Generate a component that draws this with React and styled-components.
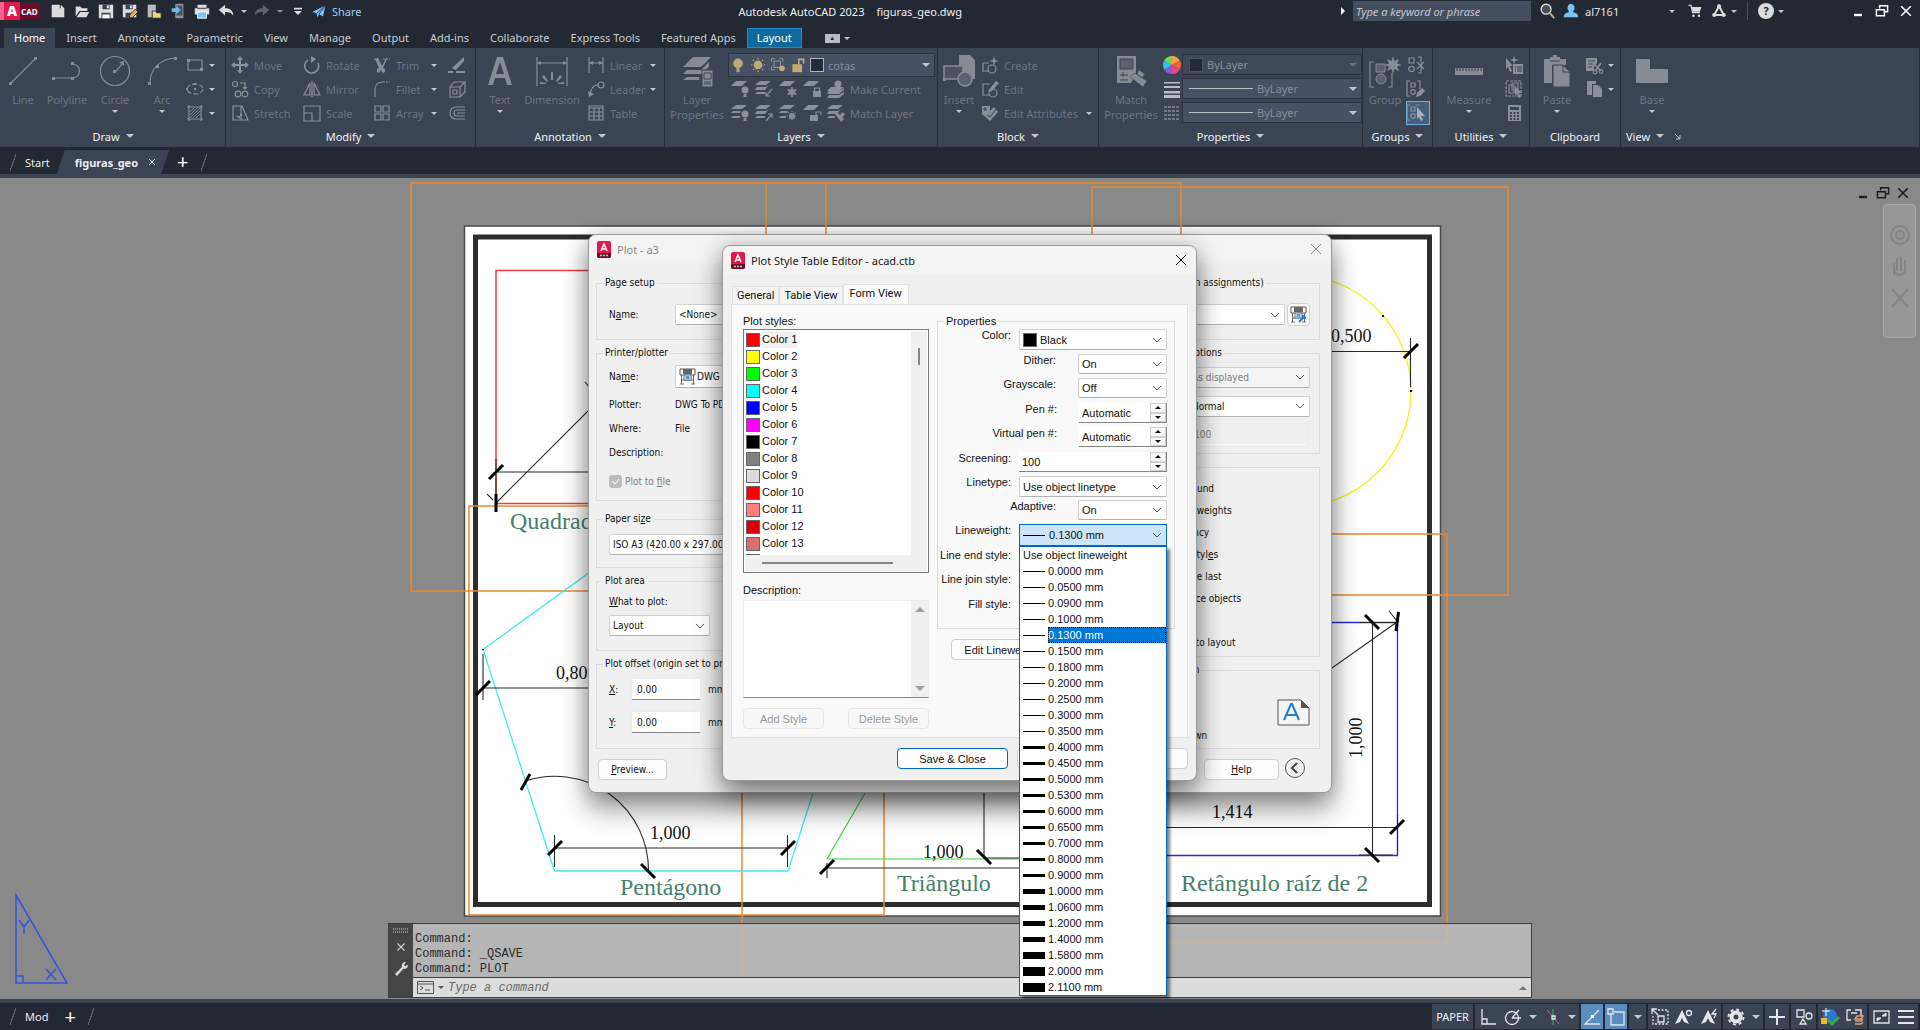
import styled, { createGlobalStyle, css } from "styled-components";

const GlobalStyle = createGlobalStyle`
  * {
    box-sizing: border-box;
  }
  body {
    margin: 0;
    background: #222933;
    font-family: "Noto Sans", "Open Sans", sans-serif;
    font-size: 11px;
  }
  button, input, select, textarea {
    font: inherit;
    color: inherit;
    margin: 0;
  }
  button {
    border: 0;
    padding: 0;
    background: none;
  }
`;

/* ---------- icons ---------- */

const line = { fill: "none", stroke: "currentColor", strokeWidth: 1.2 };
const solid = { fill: "currentColor" };

const icons = {
  newFile: <path d="M3 3h9v4h5v10H3z M13 3l4 4h-4z" fill="#dcdcdc" />,
  open: (
    <>
      <path d="M3 16V5h5l2 2h6v3H7z" fill="#dcdcdc" />
      <path d="M8 11h10l-3 6H4z" fill="#dcdcdc" />
    </>
  ),
  save: (
    <>
      <path d="M2 3h16v15H2z" fill="#dcdcdc" />
      <path d="M6 3h8v5H6z M5 12h10v6H5z" fill="#3b4453" />
      <path d="M11 4h2v3h-2z M6 14h8v4H6z" fill="#fff" />
    </>
  ),
  saveAs: (
    <>
      <path d="M2 3h15v14H2z" fill="#dcdcdc" />
      <path d="M5 3h8v5H5z M5 12h8v5H5z" fill="#3b4453" />
      <path d="M10 4h2v3h-2z" fill="#fff" />
      <path d="M9 18l1-4 6-6 3 3-6 6z" fill="#f0b050" stroke="#222933" />
    </>
  ),
  openMobile: (
    <>
      <path d="M3 3h9v14H3z" fill="#b9bdc4" />
      <path d="M8 10h4l1 2h5v6H8z" fill="#f5d080" stroke="#222933" />
    </>
  ),
  saveMobile: (
    <>
      <path d="M7 2h9v16H7z" fill="#8f959e" />
      <path d="M8 4h7v11H8z" fill="#4b5361" />
      <path d="M3 7h5V4l5 5-5 5v-3H3z" fill="#6ab8f0" />
    </>
  ),
  print: (
    <>
      <path d="M5 3h10v4H5z M2 7h16v7H2z" fill="#dcdcdc" />
      <path d="M5 11h10v7H5z" fill="#7cc4f8" stroke="#fff" />
      <path d="M5 7h10" stroke="#222933" />
    </>
  ),
  undo: <path d="M2 9l7-6v4c6 0 9 3 9 8-2-3-4-4-9-4v4z" fill="#dcdcdc" />,
  redo: <path d="M18 9l-7-6v4c-6 0-9 3-9 8 2-3 4-4 9-4v4z" fill="#5c6470" />,
  plane: (
    <>
      <path d="M2 11L18 3l-3 14-5-3-2 4-1-5z" fill="#7cc4f8" />
      <path d="M7 13l11-10-8 11" stroke="#222933" fill="none" />
    </>
  ),
  customize: <path d="M5 6h10v2H5z M5 10h10l-5 5z" fill="#dcdcdc" />,
  search: (
    <>
      <circle cx="9" cy="8" r="5.5" fill="#454e5c" stroke="#dcdcdc" strokeWidth="1.5" />
      <path d="M13 12l5 6" stroke="#c8ae8a" strokeWidth="2" />
    </>
  ),
  user: (
    <path d="M10 2a4 4.500 0 0 1 2.500 8v1.500c3 .5 5.500 2 5.500 5.500H2c0-3.500 2.500-5 5.500-5.500V10A4 4.500 0 0 1 10 2z" fill="#7cc4f8" />
  ),
  cart: (
    <>
      <path d="M2 3h3l2 9h9" fill="none" stroke="#dcdcdc" strokeWidth="1.500" />
      <path d="M6 5h12l-2 6H7z" fill="#dcdcdc" />
      <circle cx="8" cy="16" r="1.500" fill="#dcdcdc" />
      <circle cx="15" cy="16" r="1.500" fill="#dcdcdc" />
    </>
  ),
  apps: (
    <>
      <path d="M10 4L4 15h12z" fill="none" stroke="#dcdcdc" strokeWidth="2.500" />
      <circle cx="10" cy="4" r="2.500" fill="#dcdcdc" />
      <circle cx="4" cy="15" r="2.500" fill="#dcdcdc" />
      <circle cx="16" cy="15" r="2.500" fill="#dcdcdc" />
    </>
  ),
  minimize: <path d="M5 15h10" stroke="currentColor" strokeWidth="3" />,
  restore: (
    <path d="M7 7V3.500h10V11h-4M3 8.500h10V16H3z" fill="none" stroke="currentColor" strokeWidth="1.800" />
  ),
  close: <path d="M4 4l12 12M16 4L4 16" stroke="currentColor" strokeWidth="2" />,

  rect: (
    <>
      <path d="M3 5h14v10H3z" {...line} />
      <path d="M2 4h3v3H2z M15 13h3v3h-3z" {...solid} />
    </>
  ),
  ellipse: (
    <>
      <ellipse cx="10" cy="10" rx="8" ry="5" {...line} strokeDasharray="5 2" />
      <path d="M9 9h2v2H9z M1 9h2v2H1z M9 4h2v2H9z" {...solid} />
    </>
  ),
  hatch: (
    <>
      <path d="M2 4h16M2 16h16M4 2v16M16 2v16" {...line} />
      <path d="M5 9l4-4M5 12l7-7M5 15l10-10M8 15l7-7M11 15l4-4" {...line} strokeWidth=".8" />
    </>
  ),
  move: (
    <path d="M10 1l3 4h-2v4h4V7l4 3-4 3v-2h-4v4h2l-3 4-3-4h2v-4H5v2l-4-3 4-3v2h4V5H7z" {...solid} />
  ),
  copy: (
    <>
      <circle cx="5" cy="5" r="2.500" {...line} />
      <circle cx="8" cy="15" r="2.800" {...line} />
      <circle cx="15" cy="15" r="2.800" {...line} />
      <path d="M10 4h5v5" {...line} />
      <path d="M12.500 8h5L15 11z" {...solid} />
    </>
  ),
  stretch: (
    <>
      <path d="M3 3h8v14H3z M12 3l6 14h-7" {...line} />
      <path d="M6 13h7l-3-3v6z" {...solid} />
    </>
  ),
  rotate: (
    <>
      <path d="M6 5a7 7 0 1 0 10 3" {...line} strokeWidth="1.600" />
      <path d="M9 1v7l5-4z" {...solid} />
    </>
  ),
  mirror: <path d="M8 4v12H2z M12 4v12h6z M10 2v16" {...line} />,
  scale: <path d="M2 3h16v15H2z M2 10h8v8H2z" {...line} />,
  trim: (
    <>
      <path d="M2 4h6M11 4h7" {...line} strokeDasharray="2 1" />
      <path d="M6 3l4 8 4-8 1 1-4 9 2 1v3l-2 1-2-3-2 3-2-1v-3l2-1-4-9z" {...solid} />
    </>
  ),
  fillet: (
    <>
      <path d="M3 18v-7c0-5 3-8 8-8" {...line} />
      <path d="M11 3h7" {...line} strokeDasharray="2 1" />
    </>
  ),
  array: <path d="M3 3h6v6H3z M11 3h6v6h-6z M3 11h6v6H3z M11 11h6v6h-6z" {...line} />,
  erase: (
    <>
      <path d="M17 2v4l-8 9-4-2z" {...solid} />
      <path d="M1 17h5M9 17h9" stroke="currentColor" strokeWidth="2" />
    </>
  ),
  explode: (
    <path d="M3 8h10v10H3z M3 8l4-5h11l-5 5M18 3v10l-5 5M6 11h4v4H6z" {...line} />
  ),
  offset: (
    <path d="M18 4H9a6 6 0 0 0 0 12h9M18 7h-8a3 3 0 0 0 0 6h8M18 10h-8" {...line} />
  ),
  linear: (
    <>
      <path d="M3 2v16M17 2v16M4 8h12" {...line} />
      <path d="M3 8l4-2v4z M17 8l-4-2v4z" {...solid} />
    </>
  ),
  leader: (
    <>
      <circle cx="15" cy="6" r="3" {...line} />
      <path d="M12 6C7 6 5 9 4 15" {...line} />
      <path d="M2 12l1 6 5-3z" {...solid} />
    </>
  ),
  table: <path d="M3 3h14v14H3z M3 5h14M3 9h14M3 13h14M8 5v12M13 5v12" {...line} />,
  layerBulb: (
    <>
      <path d="M6 2h11l-5 5H1z" {...solid} />
      <circle cx="15" cy="11" r="3.500" {...solid} />
      <path d="M13.500 15h3v3h-3z" {...solid} />
    </>
  ),
  layerBulbAll: (
    <>
      <path d="M6 2h11l-5 4H1z M3 8h8l-1 2H1z M3 13h7v2H1z" {...solid} />
      <circle cx="15" cy="11" r="3.500" {...solid} />
      <path d="M13.500 15h3v3h-3z" {...solid} />
    </>
  ),
  layerArrow: (
    <>
      <path d="M6 2h11l-5 4H1z M3 8h9l3-2-4 5H1z M3 13h8v2H1z" {...solid} />
      <path d="M18 10l-6 7M12 13v4h4" {...line} />
    </>
  ),
  layerArrowUp: (
    <>
      <path d="M6 2h11l-5 4H1z M3 8h9l3-2-4 5H1z M3 13h8v2H1z" {...solid} />
      <path d="M12 18l6-7M14 11h4v4" {...line} />
    </>
  ),
  layerFreeze: (
    <>
      <path d="M6 2h11l-5 5H1z" {...solid} />
      <path d="M14 8v10M9.500 10.500l9 5M18.500 10.500l-9 5" {...line} strokeWidth="1.600" />
      <circle cx="14" cy="13" r="2.500" {...line} />
    </>
  ),
  layerLock: (
    <>
      <path d="M6 2h11l-5 5H1z" {...solid} />
      <path d="M11 12h8v6h-8z" {...solid} />
      <path d="M12.500 12V9h5v3" {...line} />
    </>
  ),
  layerUnlock: (
    <>
      <path d="M6 2h11l-5 5H1z" {...solid} />
      <path d="M8 12h8v6H8z" {...solid} />
      <path d="M14 12V9h5v3" {...line} />
    </>
  ),
  layerStack: (
    <>
      <circle cx="12" cy="5" r="3.500" {...solid} />
      <path d="M5 8h13l-5 4H1z M3 12h10l5-3v2l-5 4H1z M3 16h10l5-3v2l-5 4H1z" {...solid} />
    </>
  ),
  layerMatch: (
    <>
      <path d="M6 2h11l-5 4H1z M3 8h9l3-2-4 5H1z M3 13h6v2H1z" {...solid} />
      <path d="M9 11l3-1 6 6-3 3z M16 9l3 2-3 4-2-2z" {...solid} />
    </>
  ),
  layerSun: (
    <>
      <path d="M6 2h11l-5 4H1z M3 8h7l-1 2H1z M3 13h5v2H1z" {...solid} />
      <circle cx="14" cy="13" r="3" {...solid} />
      <path d="M14 8v10M9 13h10M10.500 9.500l7 7M17.500 9.500l-7 7" {...line} strokeDasharray="1 1" />
    </>
  ),
  create: (
    <>
      <path d="M3 8h6M3 8v8M2 16h7" {...line} />
      <circle cx="12" cy="14" r="4" {...line} />
      <path d="M14 1l1 4 4 1-4 1-1 4-1-4-4-1 4-1z" {...solid} />
    </>
  ),
  edit: (
    <>
      <path d="M10 5H3v11h7" {...line} />
      <circle cx="13" cy="14" r="4" {...line} />
      <path d="M8 12l8-10 3 2-8 9z" {...solid} />
    </>
  ),
  attributes: (
    <>
      <path d="M2 3h8v5l4-4 4 5-8 9-8-7z" {...solid} />
      <path d="M7 12l3 2 6-8M4 5h2v2H4z" stroke="#3b4453" fill="none" />
    </>
  ),
  ungroup: (
    <>
      <path d="M3 3h5v5H3z M12 2h3v16h-3" {...line} />
      <circle cx="5.500" cy="14" r="2.700" {...line} />
      <path d="M11 7l7 7M18 7l-7 7" {...line} />
    </>
  ),
  groupEdit: (
    <>
      <path d="M4 2H1v15h3M11 2h3v8M5 4h4v4H5z" {...line} />
      <circle cx="7" cy="13" r="2.300" {...line} />
      <path d="M10 18l1-4 5-5 3 3-5 5z" {...solid} />
    </>
  ),
  groupSelect: (
    <>
      <path d="M4 2H1v15h3M10 2h3M5 4h4v4H5z" {...line} />
      <circle cx="7" cy="13" r="2.300" {...line} />
      <path d="M11 4l8 9h-4l2 4-2 1-2-4-2 2z" fill="#a9adb4" />
    </>
  ),
  quickSelect: (
    <>
      <path d="M2 3l7 8H6l2 5-2 1-2-5-2 2z" {...solid} />
      <path d="M10 1l1 3 4 1-4 1-1 3-1-3-3-1 3-1z" {...solid} />
      <path d="M9 9h10v10H9z" {...solid} />
      <path d="M11 12h1M13 12h5M11 14h1M13 14h5M11 16h1M13 16h5" stroke="#3b4453" />
    </>
  ),
  selectAll: (
    <>
      <path d="M2 2h15v15H2z" {...line} strokeDasharray="3 1" />
      <path d="M5 6h5v8H5z M8 4h6v7H8z" {...line} />
      <path d="M11 7l7 7h-3l2 4-2 1-2-4-2 2z" {...solid} />
    </>
  ),
  calculator: (
    <>
      <path d="M4 2h13v16H4z" {...solid} />
      <path d="M6 4h9v3H6z M6 9h2v2H6z M9.500 9h2v2h-2z M13 9h2v2h-2z M6 12h2v2H6z M9.500 12h2v2h-2z M13 12h2v2h-2z M6 15h2v2H6z M9.500 15h2v2h-2z M13 15h2v2h-2z" fill="#3b4453" />
    </>
  ),
  cut: (
    <>
      <path d="M2 3h11v5l-3 3v5H2z" {...solid} />
      <path d="M4 6h7M4 9h5M4 12h4" stroke="#3b4453" />
      <path d="M9 8l8 8M17 8l-6 8" {...line} strokeWidth="1.600" />
      <circle cx="11" cy="17" r="1.800" {...line} />
      <circle cx="17" cy="16.500" r="1.800" {...line} />
    </>
  ),
  copyClip: (
    <>
      <path d="M3 2h9v3H8v11H3z" {...solid} />
      <path d="M9 6h5l4 4v8H9z" {...solid} />
    </>
  ),
  wheel: (
    <>
      <path d="M10 10V1a9 9 0 0 1 7.800 4.500z" fill="#f9a03f" />
      <path d="M10 10l7.800-4.500a9 9 0 0 1 0 9z" fill="#f2603c" />
      <path d="M10 10l7.800 4.500A9 9 0 0 1 10 19z" fill="#e8457a" />
      <path d="M10 10v9a9 9 0 0 1-7.800-4.500z" fill="#8a55e0" />
      <path d="M10 10l-7.800 4.500a9 9 0 0 1 0-9z" fill="#2fc3e8" />
      <path d="M10 10L2.200 5.500A9 9 0 0 1 10 1z" fill="#6fd860" />
    </>
  ),
  weights: <path d="M2 3h16v1.500H2z M2 7h16v2H2z M2 12h16v2.500H2z M2 16h16v3H2z" fill="#b9bdc4" />,
  linetypes: (
    <path d="M2 4h16M2 8h16M2 12h16M2 16h16" stroke="#a9adb4" strokeDasharray="3 1" />
  ),
  bulb: (
    <>
      <circle cx="10" cy="8" r="6" fill="#c4a874" />
      <path d="M8 13h4v3H8z" fill="#c4a874" />
      <path d="M8 16h4v3H8z" fill="#9aa0a8" />
    </>
  ),
  sun: (
    <>
      <circle cx="10" cy="10" r="5.500" fill="#c4a874" />
      <path d="M10 1v18M1 10h18M3.500 3.500l13 13M16.500 3.500l-13 13" stroke="#c4a874" strokeWidth="1.500" strokeDasharray="2 14" />
    </>
  ),
  vpFreeze: (
    <>
      <path d="M2 6V2h4M12 2h4v4M2 12v4h4M5 5h8v8H5z" fill="none" stroke="#a9adb4" />
      <circle cx="15" cy="14" r="3.500" fill="#c4a874" />
    </>
  ),
  unlock: (
    <>
      <path d="M3 9h12v10H3z" fill="#c4a874" />
      <path d="M11 9V3h6v5" fill="none" stroke="#c4a874" strokeWidth="2" />
    </>
  ),
};

const bigIcons = {
  Line: (
    <>
      <path d="M4 28L28 4" {...line} />
      <path d="M2 27h3v3H2z M27 2h3v3h-3z" {...solid} />
    </>
  ),
  Polyline: (
    <>
      <path d="M3 23h18c10 0 10-14 0-14" {...line} />
      <path d="M1 22h3v3H1z M20 22h3v3h-3z M20 7h3v3h-3z" {...solid} />
    </>
  ),
  Circle: (
    <>
      <circle cx="16" cy="16" r="14.500" {...line} />
      <path d="M16 17l8-9" {...line} />
      <path d="M25 6v5l-5-4z M14 15h3v3h-3z" {...solid} />
    </>
  ),
  Arc: (
    <>
      <path d="M4 28C4 14 14 4 29 3" {...line} />
      <path d="M2 27h3v3H2z M28 2h3v3h-3z M10 10h3v3h-3z" {...solid} />
    </>
  ),
  Text: <path d="M13 2h6l9 28h-5l-2-7H11l-2 7H4z M16 7l-4 12h8z" {...solid} fillRule="evenodd" />,
  Dimension: (
    <>
      <path d="M1 2v29M31 2v29M2 8h28" {...line} />
      <path d="M1 8l4-2v4z M31 8l-4-2v4z M15 17h2v8h-2z M8 20l4 6-1 1-5-5z M24 20l-4 6 1 1 5-5z M4 27l6 1v1H4z M28 27l-6 1v1h6z" {...solid} />
    </>
  ),
  "Layer Properties": (
    <>
      <path d="M12 2h18L20 12H2z M6 15h14l8-8v5l-8 7H2z M6 22h12v3H2z" {...solid} />
      <path d="M21 15h11v17H21z" {...solid} stroke="#3b4453" />
      <path d="M23 18h7v6h-7z M23 27h7M23 29h7" fill="none" stroke="#3b4453" />
    </>
  ),
  Insert: (
    <>
      <path d="M16 0h11l5 5v19H16z" {...solid} />
      <path d="M1 11h19v13H1z" fill="#4c5463" stroke="currentColor" strokeWidth="1.500" />
      <circle cx="22" cy="24" r="7" fill="#5a6270" stroke="currentColor" strokeWidth="1.500" />
      <path d="M0 23h3v3H0z" {...solid} />
    </>
  ),
  "Match Properties": (
    <>
      <path d="M2 1h19v18l-5 9H2z" {...solid} />
      <path d="M5 4h13v10H5z M5 20h8M5 25h8M8 17v5" fill="#5a6270" stroke="#3b4453" />
      <path d="M15 22l5-4 12 8-4 6z M24 15l6 4-3 4-5-4z" {...solid} stroke="#3b4453" strokeWidth=".6" />
    </>
  ),
  Group: (
    <>
      <path d="M5 7H1v25h4M19 32h4V18" {...line} />
      <path d="M7 9h9v8H7z" fill="#5a6270" stroke="currentColor" />
      <circle cx="12" cy="24" r="5" fill="#5a6270" stroke="currentColor" />
      <path d="M24 1l1.500 5 4.500-2-2 4.500 5 1.500-5 1.500 2 4.500-4.500-2-1.500 5-1.500-5-4.500 2 2-4.500-5-1.500 5-1.500-2-4.500 4.500 2z" {...solid} />
    </>
  ),
  Measure: (
    <>
      <path d="M2 13h28v7H2z" {...solid} />
      <path d="M4 13v3M7 13v3M10 13v3M13 13v3M16 13v3M19 13v3M22 13v3M25 13v3M28 13v3" stroke="#3b4453" />
    </>
  ),
  Paste: (
    <>
      <path d="M3 4h6V2h3V0h4v2h3v2h6v6H11v18H3z" {...solid} />
      <path d="M9 6h10" stroke="#3b4453" />
      <path d="M12 10h10l7 7v15H12z" fill="currentColor" stroke="#3b4453" />
      <path d="M22 10v7h7" fill="none" stroke="#3b4453" />
    </>
  ),
  Base: <path d="M0 4h14v10h18v14H0z" {...solid} />,
};

function Icon({ name, size = 20 }) {
  return (
    <svg width={size} height={size} viewBox="0 0 20 20" aria-hidden="true">
      {icons[name]}
    </svg>
  );
}

const Caret = styled.span`
  flex: none;
  width: 0;
  height: 0;
  border: ${(p) => p.$size || 3}px solid transparent;
  border-top-color: ${(p) => p.$color || "#c3c7cd"};
  border-bottom: 0;
  ${(p) => p.$turn && css`transform: rotate(${p.$turn}deg);`}
`;

function AutocadLogo() {
  return (
    <svg width="14" height="17" viewBox="0 0 14 17" aria-hidden="true">
      <rect width="14" height="17" rx="2" fill="#e3174f" />
      <path d="M0 12h14v3a2 2 0 0 1-2 2H2a2 2 0 0 1-2-2z" fill="#6d0c2a" />
      <path d="M4 10l3-7 3 7M5 8h4" fill="none" stroke="#fff" strokeWidth="1.500" />
      <path d="M3 14.500h8" stroke="#e8b0c0" strokeWidth="1.500" strokeDasharray="2 1" />
    </svg>
  );
}

/* ---------- application frame ---------- */

const Page = styled.div`
  min-height: 100vh;
  display: flex;
  flex-direction: column;
  color: #dcdfe3;
`;

const TitleBar = styled.header`
  display: grid;
  grid-template-columns: auto 1fr auto;
  align-items: start;
  height: 28px;
`;

const QuickAccess = styled.div`
  display: flex;
  align-items: center;
  height: 22px;

  button {
    display: flex;
    align-items: center;
    justify-content: center;
    width: 24px;
  }
  button.narrow {
    width: 12px;
  }
`;

const AppBadge = styled.div`
  display: flex;
  align-items: center;
  height: 16px;
  width: 40px;
  margin-right: 6px;
  background: #6d0c2a;
  color: #fff;
  font-size: 8px;
  font-weight: 700;

  b {
    width: 20px;
    margin-right: 1px;
    line-height: 18px;
    text-align: center;
    font-size: 14px;
    background: #e3174f;
    border-left: 4px solid #f0638a;
  }
`;

const ShareLink = styled.a`
  display: flex;
  align-items: center;
  gap: 5px;
  margin-left: 1px;
  color: #9ccdf0;
  text-decoration: none;
`;

const WindowTitle = styled.h1`
  margin: 0;
  display: flex;
  justify-content: center;
  gap: 12px;
  color: #eceef0;
  font-size: 11px;
  font-weight: 400;
  line-height: 24px;
`;

const TitleTools = styled.div`
  display: flex;
  align-items: center;
  justify-content: flex-end;
  height: 22px;
  padding-right: 2px;
`;

const ToolButton = styled.button`
  display: flex;
  align-items: center;
  justify-content: center;
  width: 24px;
  margin-left: ${(p) => p.$ml || 0}px;
  color: #fff;
`;

const SearchBox = styled.input`
  width: 178px;
  height: 20px;
  margin: 0 4px 0 6px;
  padding: 0 3px;
  border: 0;
  background: #454e5f;
  font-style: italic;

  &::placeholder {
    color: #c3c7cd;
    opacity: 1;
  }
`;

const UserName = styled.span`
  width: 84px;
  margin-left: 2px;
  color: #e4e6e9;
`;

const Divider = styled.span`
  width: 1px;
  height: 18px;
  margin: 0 6px 0 10px;
  background: #4a5260;
`;

const HelpMark = styled.span`
  width: 16px;
  height: 16px;
  border-radius: 8px;
  background: #dcdcdc;
  color: #222933;
  font-weight: 700;
  line-height: 16px;
  text-align: center;
`;

const RibbonTabs = styled.nav`
  display: flex;
  align-items: stretch;
  gap: 1px;
  height: 20px;
  padding-left: 4px;
`;

const RibbonTab = styled.button`
  padding: 0 10px;
  line-height: 18px;
  color: #c8ccd1;
  ${(p) => p.$active && css`
    background: #3b4453;
    color: #fff;
  `}
  ${(p) => p.$context && css`
    background: #0f6a9b;
    box-shadow: inset 0 0 0 1px #1d8ecb;
    color: #fff;
  `}
`;

const RibbonToggle = styled.button`
  display: flex;
  align-items: center;
  gap: 4px;
  margin-left: 22px;

  span:first-child {
    width: 15px;
    height: 9px;
    background: #b9bdc4;
    color: #222933;
    font-size: 6px;
    line-height: 9px;
  }
`;

const Ribbon = styled.section`
  display: flex;
  min-height: 99px;
  padding-left: 1px;
  background: #3b4453;
`;

const Panel = styled.div`
  display: flex;
  flex-direction: column;
  flex: ${(p) => (p.$w ? `0 0 ${p.$w}px` : "1")};
  border-right: 1px solid #272e39;
`;

const PanelBody = styled.div`
  display: flex;
  flex: 1;
  padding: 5px 0 0 ${(p) => p.$pad || 0}px;
  color: #7c828c;
`;

const PanelTitle = styled.div`
  display: flex;
  align-items: center;
  justify-content: ${(p) => (p.$left ? "flex-start" : "center")};
  gap: 6px;
  padding-left: ${(p) => (p.$left ? 5 : 0)}px;
  height: 22px;
  color: #f0f1f3;

  svg {
    margin-left: ${(p) => (p.$left ? 4 : 0)}px;
  }
`;

const BigButton = styled.button`
  display: flex;
  flex-direction: column;
  align-items: center;
  justify-content: flex-start;
  gap: 3px;
  flex: 0 0 ${(p) => p.$w}px;
  padding-top: 2px;
  line-height: 15px;
  color: #868b94;

  span:first-of-type {
    color: #6d7480;
  }
`;

const Column = styled.div`
  display: flex;
  flex-direction: column;
  flex: 0 0 ${(p) => p.$w}px;
  margin-left: ${(p) => p.$ml || 0}px;
`;

const SmallButton = styled.button`
  display: flex;
  align-items: center;
  gap: 4px;
  height: 24px;
  color: #8a8f98;
  white-space: nowrap;

  em {
    font-style: normal;
    color: #6d7480;
  }
  svg {
    flex: none;
  }
  em + span {
    margin-left: auto;
    margin-right: ${(p) => p.$end || 0}px;
  }
  ${(p) => p.$on && css`
    width: 24px;
    outline: 1px solid #6fb0dc;
    outline-offset: -1px;
    background: #46607c;
  `}
`;

const Combos = styled.div`
  display: flex;
  flex-direction: column;
  flex: 0 0 180px;
  gap: 3px;
  padding-top: 1px;
`;

const ComboBox = styled.button`
  display: flex;
  align-items: center;
  gap: 4px;
  height: ${(p) => p.$h || 21}px;
  padding: 0 4px 0 ${(p) => p.$pl || 6}px;
  border: 1px solid #2b3340;
  background: ${(p) => (p.$off ? "#3f4858" : "#465164")};
  color: #868d99;

  i {
    width: 14px;
    height: 14px;
    border: 1px solid ${(p) => (p.$off ? "#4a5261" : "#aeb3bb")};
    background: #242b36;
  }
  hr {
    flex: 1;
    margin: 0;
    max-width: 64px;
    border: 0;
    border-top: 1px solid #b9bdc4;
  }
  span:last-child {
    margin-left: auto;
  }
`;

const LayerRow = styled.div`
  display: flex;
  align-items: center;
  gap: 4px;
  height: 24px;
  padding-left: 2px;
  color: #8a8f98;

  em {
    font-style: normal;
    color: #6d7480;
  }
`;

const FileTabs = styled.nav`
  display: flex;
  align-items: center;
  height: 31px;
  padding: 3px 0 0 10px;
  border-bottom: 4px solid #3b4453;
  color: #e4e6e9;
`;

const Slash = styled.span`
  width: 6px;
  height: 17px;
  background: linear-gradient(to bottom right, transparent 44%, #5c6470 46%, #5c6470 54%, transparent 56%);
`;

const FileTab = styled.button`
  display: flex;
  align-items: center;
  gap: 9px;
  height: 24px;
  margin-left: ${(p) => (p.$active ? 7 : 9)}px;
  margin-right: ${(p) => (p.$layout ? 8 : 0)}px;
  color: #eceef0;
  ${(p) => p.$active && css`
    padding: 0 12px 0 18px;
    background: #3b4453;
    clip-path: polygon(8px 0, 100% 0, calc(100% - 8px) 100%, 0 100%);
    font-weight: 700;
  `}
`;

const PlusButton = styled.button`
  margin: 0 12px 0 8px;
  color: #fff;
  font-size: 20px;
  line-height: 20px;
`;

/* ---------- workspace ---------- */

const Workspace = styled.main`
  position: relative;
  flex: 1;
  overflow: hidden;
  background: #898989;
`;

const Drawing = styled.svg`
  position: absolute;
  inset: 0;
  width: 100%;
  height: 100%;
  font-family: "Liberation Serif", serif;
`;

const ViewControls = styled.div`
  position: absolute;
  top: 7px;
  right: 9px;
  display: flex;
  gap: 4px;
  color: #1c1c1c;
`;

const NavBar = styled.div`
  position: absolute;
  top: 26px;
  right: 4px;
  display: flex;
  flex-direction: column;
  align-items: center;
  width: 33px;
  height: 134px;
  padding-top: 12px;
  border: 1px solid #a8a8a8;
  border-radius: 4px;
  background: #979797;
  color: #848484;
`;

const CommandWindow = styled.section`
  position: absolute;
  left: 388px;
  right: 388px;
  bottom: 1px;
  display: flex;
  border: 1px solid #3f3f3f;
  font-family: "Liberation Mono", monospace;
  font-size: 12px;
`;

const CommandGrip = styled.div`
  display: flex;
  flex-direction: column;
  align-items: center;
  justify-content: space-between;
  width: 24px;
  padding: 4px 0 20px;
  background: #454545;
  color: #d8d8d8;
`;

const CommandBody = styled.div`
  flex: 1;
  color: #2b2b2b;
`;

const CommandHistory = styled.div`
  padding: 8px 2px 0;
  background: rgba(190, 190, 190, 0.84);
  line-height: 15px;
`;

const CommandLine = styled.label`
  display: flex;
  align-items: center;
  gap: 4px;
  height: 20px;
  padding: 0 4px;
  border-top: 1px solid #3f3f3f;
  background: #dcdcdc;

  input {
    flex: 1;
    border: 0;
    padding: 0;
    background: none;
    font-style: italic;
    outline: 0;
  }
  input::placeholder {
    color: #6a6a6a;
    opacity: 1;
  }
`;

/* ---------- dialogs ---------- */

const Dialog = styled.section`
  position: absolute;
  left: ${(p) => p.$x}px;
  top: ${(p) => p.$y}px;
  width: ${(p) => p.$w}px;
  border: 1px solid #9a9a9a;
  border-radius: 8px;
  background: #f0f0f0;
  box-shadow: 0 16px 28px rgba(0, 0, 0, 0.4), 0 2px 20px rgba(0, 0, 0, 0.22);
  color: #111;
`;

const DialogTitle = styled.div`
  display: flex;
  align-items: center;
  gap: 6px;
  height: 28px;
  padding: 0 9px 0 8px;
  border-radius: 8px 8px 0 0;
  background: #f3f3f3;
  color: ${(p) => (p.$inactive ? "#8a8a8a" : "#1a1a1a")};

  h2 {
    flex: 1;
    margin: 0;
    font-size: 11px;
    font-weight: 400;
  }
  button {
    display: flex;
  }
`;

const PlotBody = styled.div`
  display: grid;
  grid-template-columns: 497px 1fr;
  column-gap: 8px;
  padding: 13px 11px 12px 7px;
  font-family: "DejaVu Sans Condensed", "DejaVu Sans", sans-serif;
  font-size: 10px;
`;

const Stack = styled.div`
  display: flex;
  flex-direction: column;
  gap: ${(p) => p.$gap || 0}px;
`;

const Group = styled.fieldset`
  display: flex;
  flex-direction: column;
  justify-content: flex-start;
  min-width: 0;
  min-height: ${(p) => p.$h}px;
  margin: 0 0 ${(p) => p.$mb || 0}px;
  padding: ${(p) => p.$pt || 0}px 9px 0 12px;
  border: 1px solid #dcdcdc;

  legend {
    margin-left: -6px;
    padding: 0 2px;
    line-height: 14px;
  }
`;

const Row = styled.div`
  display: flex;
  align-items: center;
  gap: ${(p) => p.$gap || 0}px;
  min-height: ${(p) => p.$h || 24}px;

  > label:first-child,
  > span:first-child {
    flex: 0 0 ${(p) => p.$label || 66}px;
  }
`;

const SelectFrame = styled.div`
  display: grid;
  align-items: center;
  flex: ${(p) => (p.$w ? `0 0 ${p.$w}px` : 1)};
  height: ${(p) => p.$h || 21}px;
  border: 1px solid #d0d0d0;
  border-bottom-color: #b4b4b4;
  border-radius: 2px;
  background: ${(p) => (p.$off ? "#f4f4f4" : "#fff")};
  color: ${(p) => (p.$off ? "#7e7e7e" : "#111")};

  select, > svg, > i {
    grid-area: 1 / 1;
  }
  select {
    appearance: none;
    width: 100%;
    height: 100%;
    padding: 0 18px 0 ${(p) => p.$pl || 3}px;
    border: 0;
    background: none;
    opacity: 1;
  }
  > svg {
    justify-self: end;
    margin-right: 4px;
    pointer-events: none;
  }
  > i {
    width: 14px;
    height: 14px;
    margin-left: 3px;
    border: 1px solid #666;
    background: #000;
  }
  > svg.plotter {
    justify-self: start;
    margin-left: 3px;
  }
`;

function Chevron() {
  return (
    <svg width="10" height="6" viewBox="0 0 10 6" aria-hidden="true">
      <path d="M1 1l4 4 4-4" fill="none" stroke="#555" />
    </svg>
  );
}

function Select({ id, value, label, swatch, plotter, ...rest }) {
  return (
    <SelectFrame {...rest}>
      {swatch && <i />}
      {plotter && <PlotterIcon className="plotter" />}
      <select id={id} aria-label={label} disabled={rest.$off} defaultValue={value}>
        <option>{value}</option>
      </select>
      <Chevron />
    </SelectFrame>
  );
}

function PlotterIcon({ className, wrench }) {
  return (
    <svg className={className} width="17" height="17" viewBox="0 0 17 17" aria-hidden="true">
      <path d="M1 1h15v6H1z" fill="#fff" stroke="#555" />
      <path d="M4 1h9v5H4z" fill="#666" />
      <path d="M2.500 7v9M14.500 7v9M1 16h4M12 16h4M2.500 12h12" stroke="#666" fill="none" />
      <path d="M5 7h7v5H5z" fill="#fff" stroke="#666" />
      <path d="M6.500 8h4v3h-4z" fill="#4aa0dc" />
      {wrench && <path d="M9 16l6-6M13 9v3h3" stroke="#1f7fd0" strokeWidth="2" fill="none" />}
    </svg>
  );
}

const TextField = styled.input`
  width: ${(p) => p.$w || 70}px;
  height: 22px;
  padding: 0 5px;
  border: 1px solid #ececec;
  border-bottom-color: ${(p) => (p.disabled ? "#fafafa" : "#868686")};
  border-radius: 2px;
  background: ${(p) => (p.disabled ? "none" : "#fff")};
  color: ${(p) => (p.disabled ? "#7e7e7e" : "#111")};
`;

const PushButton = styled.button`
  width: ${(p) => p.$w}px;
  height: 21px;
  border: 1px solid ${(p) => (p.$primary ? "#0067c0" : "#d0d0d0")};
  border-radius: 4px;
  background: #fdfdfd;

  &:disabled {
    border-color: #e6e6e6;
    background: #f7f7f7;
    color: #9a9a9a;
  }
`;

const CheckLabel = styled.label`
  display: flex;
  align-items: center;
  gap: 3px;
  height: ${(p) => p.$h || 22}px;
  color: ${(p) => (p.$off ? "#7e7e7e" : "#111")};

  input {
    appearance: none;
    width: 13px;
    height: 13px;
    margin: 0;
    border: 1px solid #8a8a8a;
    border-radius: 3px;
    background: #fff;
  }
  input:disabled {
    border-color: #bdbdbd;
    background: #bdbdbd;
  }
  input + svg {
    margin-left: -15px;
    margin-right: 1px;
  }
`;

const PlotFooter = styled.div`
  grid-column: 1 / -1;
  display: flex;
  align-items: center;
  padding: 9px 15px 0 2px;

  button:nth-child(2) {
    margin-left: auto;
    margin-right: 6px;
  }
`;

const IconButton = styled.button`
  display: grid;
  place-items: center;
  width: 23px;
  height: 23px;
  border: 1px solid #d0d0d0;
  border-radius: 4px;
  background: #fdfdfd;
`;

const SheetPreview = styled.svg`
  align-self: flex-end;
  margin-top: 22px;
`;

const EditorBody = styled.div`
  display: flex;
  flex-direction: column;
  padding: 10px 8px 11px;
  font-family: "Liberation Sans", Arial, sans-serif;
`;

const EditorTabs = styled.div`
  display: flex;
  align-items: flex-end;
  padding-left: 1px;
  font-family: Roboto, sans-serif;
`;

const EditorTab = styled.button`
  height: ${(p) => (p.$active ? 21 : 18)}px;
  padding: 0 ${(p) => (p.$active ? 6 : 4)}px ${(p) => (p.$active ? 3 : 1)}px;
  margin-bottom: ${(p) => (p.$active ? -1 : 0)}px;
  border: 1px solid #e2e2e2;
  border-bottom: 0;
  background: ${(p) => (p.$active ? "#f9f9f9" : "#f3f3f3")};
`;

const EditorPanel = styled.div`
  display: grid;
  grid-template-columns: 186px 238px;
  column-gap: 8px;
  padding: 8px 11px;
  border: 1px solid #e2e2e2;
  background: #f9f9f9;
`;

const FieldTitle = styled.label`
  margin: ${(p) => (p.$spaced ? "9px 0 2px" : 0)};
  line-height: 16px;
`;

const StyleList = styled.div`
  display: grid;
  grid-template-columns: 1fr 16px;
  grid-template-rows: 1fr 16px;
  height: 244px;
  padding: 1px;
  border: 1px solid #7a7a7a;
  background: #fff;
`;

const StyleItems = styled.ul`
  margin: 0;
  padding: 0 0 0 1px;
  list-style: none;
  overflow: hidden;
`;

const StyleItem = styled.li`
  display: flex;
  align-items: center;
  gap: 2px;
  height: 17px;
  white-space: nowrap;

  i {
    width: 14px;
    height: 14px;
    border: 1px solid #666;
    background: ${(p) => p.$color};
  }
  span {
    line-height: 17px;
    background: ${(p) => (p.$focus ? "#f0f0f0" : "none")};
  }
`;

const ScrollTrack = styled.div`
  display: flex;
  background: #f0f0f0;
  ${(p) => p.$bottom ? css`
    grid-column: 1 / -1;
    align-items: center;
    padding-left: 17px;
  ` : css`
    justify-content: center;
    padding-top: 17px;
  `}

  &::before {
    content: "";
    width: ${(p) => (p.$bottom ? 131 : 2)}px;
    height: ${(p) => (p.$bottom ? 2 : 17)}px;
    background: #868686;
  }
`;

const DescriptionBox = styled.div`
  display: flex;
  height: 98px;
  border: 1px solid #ececec;
  border-bottom-color: #868686;
  background: #fff;

  textarea {
    flex: 1;
    min-width: 0;
    border: 0;
    resize: none;
    background: none;
  }
  div {
    display: flex;
    flex-direction: column;
    align-items: center;
    justify-content: space-between;
    width: 17px;
    padding: 6px 0;
    background: #f0f0f0;
  }
`;

const ButtonPair = styled.div`
  display: flex;
  justify-content: ${(p) => (p.$end ? "flex-end" : "space-between")};
  gap: ${(p) => p.$gap || 0}px;
  padding: ${(p) => p.$pad || "10px 0 0"};
`;

const Properties = styled.fieldset`
  margin: 0;
  min-width: 0;
  min-height: 316px;
  padding: 0 7px 0 0;
  border: 1px solid #dcdcdc;

  legend {
    margin-left: 6px;
    padding: 0 2px;
    line-height: 16px;
  }
`;

const PropertyRow = styled.div`
  position: relative;
  display: flex;
  justify-content: flex-end;
  align-items: flex-start;
  height: ${(p) => (p.$short ? 24 : 25)}px;

  > label {
    padding-right: ${(p) => (p.$narrow ? 22 : 8)}px;
    line-height: 13px;
    white-space: nowrap;
  }
  > label:only-child {
    padding-right: 156px;
  }
`;

const Spinner = styled.div`
  display: flex;
  width: ${(p) => p.$w}px;
  height: 20px;
  border-bottom: 1px solid #868686;
  background: #fff;

  input {
    flex: 1;
    min-width: 0;
    padding: 0 3px;
    border: 0;
    background: none;
  }
  div {
    display: flex;
    flex-direction: column;
    width: 17px;
    border-right: 1px solid #868686;
  }
  button {
    flex: 1;
    display: grid;
    place-items: center;
    border: 1px solid #d0d0d0;
    background: #f9f9f9;
  }
`;

function SpinBox({ id, value, $w }) {
  return (
    <Spinner $w={$w}>
      <input id={id} defaultValue={value} />
      <div>
        <button aria-label="Increase">
          <Caret $color="#111" $turn={180} />
        </button>
        <button aria-label="Decrease">
          <Caret $color="#111" />
        </button>
      </div>
    </Spinner>
  );
}

const WeightBox = styled.button`
  display: flex;
  align-items: center;
  gap: 4px;
  width: 148px;
  height: 22px;
  padding: 0 4px 0 3px;
  border: 1px solid #0067c0;
  background: #cce4f7;

  svg:last-child {
    margin-left: auto;
  }
`;

const WeightMenu = styled.ul`
  position: absolute;
  z-index: 5;
  top: 22px;
  right: 0;
  width: 148px;
  margin: 0;
  padding: 0;
  list-style: none;
  border: 1px solid #0067c0;
  background: #fff;
  box-shadow: 3px 3px 3px rgba(0, 0, 0, 0.5);
`;

const WeightItem = styled.li`
  display: flex;
  align-items: center;
  gap: 3px;
  height: 16px;
  padding-left: 3px;
  line-height: 16px;

  span {
    flex: 1;
    ${(p) => p.$selected && css`
      outline: 1px dotted #111;
      outline-offset: -1px;
      background: #0078d7;
      color: #fff;
    `}
  }
`;

const Stroke = styled.i`
  flex: none;
  width: 22px;
  height: ${(p) => p.$h}px;
  background: #000;
`;

/* ---------- status bar ---------- */

const StatusBar = styled.footer`
  display: flex;
  align-items: center;
  height: 31px;
  padding: 0 2px 0 10px;
  border-top: 4px solid #3b4453;
  color: #eceef0;
`;

const StatusCell = styled.button`
  display: flex;
  align-items: center;
  justify-content: space-around;
  width: ${(p) => p.$w}px;
  height: 25px;
  margin-left: 2px;
  background: ${(p) => (p.$on ? "#5b8cc0" : "#3b4453")};
  color: #f0f1f3;
`;

const StatusSpacer = styled.span`
  flex: 1;
`;

/* ---------- data ---------- */

const tabs = [
  "Home", "Insert", "Annotate", "Parametric", "View", "Manage", "Output",
  "Add-ins", "Collaborate", "Express Tools", "Featured Apps", "Layout",
];

const plotColors = [
  "#ff0000", "#ffff00", "#00ff00", "#00ffff", "#0000ff", "#ff00ff", "#000000",
  "#808080", "#dcdcdc", "#ff0000", "#ff7f7f", "#dd0000", "#dd6e6e",
];

const lineweights = [
  ["0.0000", 1], ["0.0500", 1], ["0.0900", 1], ["0.1000", 1], ["0.1300", 1],
  ["0.1500", 1], ["0.1800", 1], ["0.2000", 1], ["0.2500", 1], ["0.3000", 1],
  ["0.3500", 1], ["0.4000", 3], ["0.4500", 3], ["0.5000", 3], ["0.5300", 3],
  ["0.6000", 3], ["0.6500", 3], ["0.7000", 3], ["0.8000", 3], ["0.9000", 3],
  ["1.0000", 5], ["1.0600", 5], ["1.2000", 5], ["1.4000", 5], ["1.5800", 7],
  ["2.0000", 9], ["2.1100", 9],
];

const plotOptions = [
  <>Plot in background</>,
  <>Plot object lineweights</>,
  <>Plot transparency</>,
  <>Plot with plot styl<u>e</u>s</>,
  <>Plot paperspace last</>,
  <>Hide paperspace ob<u>j</u>ects</>,
  <>Plot stamp on</>,
  <>Save changes to layout</>,
];

/* ---------- pieces ---------- */

function Big({ name, w, caret }) {
  return (
    <BigButton $w={w}>
      <svg width="32" height="34" viewBox="0 0 32 34" aria-hidden="true">
        {bigIcons[name]}
      </svg>
      <span>{name}</span>
      {caret && <Caret />}
    </BigButton>
  );
}

function Small({ icon, text, caret, on, end }) {
  return (
    <SmallButton $on={on} $end={end}>
      <Icon name={icon} />
      {text && <em>{text}</em>}
      {caret && <Caret />}
    </SmallButton>
  );
}

function RibbonPanel({ title, w, pad, left, launcher, caret = true, children }) {
  return (
    <Panel $w={w}>
      <PanelBody $pad={pad}>{children}</PanelBody>
      <PanelTitle $left={left}>
        {title}
        {caret && <Caret $size={4} />}
        {launcher && (
          <svg width="7" height="7" viewBox="0 0 7 7" aria-hidden="true">
            <path d="M1 1l5 5M6 2v4H2" fill="none" stroke="#b9bdc4" />
          </svg>
        )}
      </PanelTitle>
    </Panel>
  );
}

function RibbonArea() {
  return (
    <Ribbon>
      <RibbonPanel title="Draw" w={225}>
        <Big name="Line" w={44} />
        <Big name="Polyline" w={44} />
        <Big name="Circle" w={52} caret />
        <Big name="Arc" w={42} caret />
        <Column $w={36} $ml={2}>
          <Small icon="rect" caret />
          <Small icon="ellipse" caret />
          <Small icon="hatch" caret />
        </Column>
      </RibbonPanel>
      <RibbonPanel title="Modify" w={250} pad={4}>
        <Column $w={72}>
          <Small icon="move" text="Move" />
          <Small icon="copy" text="Copy" />
          <Small icon="stretch" text="Stretch" />
        </Column>
        <Column $w={70}>
          <Small icon="rotate" text="Rotate" />
          <Small icon="mirror" text="Mirror" />
          <Small icon="scale" text="Scale" />
        </Column>
        <Column $w={75}>
          <Small icon="trim" text="Trim" caret end={10} />
          <Small icon="fillet" text="Fillet" caret end={10} />
          <Small icon="array" text="Array" caret end={10} />
        </Column>
        <Column $w={24}>
          <Small icon="erase" />
          <Small icon="explode" />
          <Small icon="offset" />
        </Column>
      </RibbonPanel>
      <RibbonPanel title="Annotation" w={189}>
        <Big name="Text" w={48} caret />
        <Big name="Dimension" w={56} />
        <Column $w={72} $ml={6}>
          <Small icon="linear" text="Linear" caret end={2} />
          <Small icon="leader" text="Leader" caret end={2} />
          <Small icon="table" text="Table" />
        </Column>
      </RibbonPanel>
      <RibbonPanel title="Layers" w={273} pad={1}>
        <Big name="Layer Properties" w={62} />
        <Column $w={207}>
          <ComboBox $h={24} $pl={1}>
            <Icon name="bulb" size={16} />
            <Icon name="sun" size={16} />
            <Icon name="vpFreeze" size={16} />
            <Icon name="unlock" size={16} />
            <i />
            cotas
            <Caret $size={4} />
          </ComboBox>
          <LayerRow>
            <Icon name="layerBulb" />
            <Icon name="layerArrow" />
            <Icon name="layerFreeze" />
            <Icon name="layerLock" />
            <Icon name="layerStack" />
            <em>Make Current</em>
          </LayerRow>
          <LayerRow>
            <Icon name="layerBulbAll" />
            <Icon name="layerArrowUp" />
            <Icon name="layerSun" />
            <Icon name="layerUnlock" />
            <Icon name="layerMatch" />
            <em>Match Layer</em>
          </LayerRow>
        </Column>
      </RibbonPanel>
      <RibbonPanel title="Block" w={161} pad={1}>
        <Big name="Insert" w={40} caret />
        <Column $w={118} $ml={1}>
          <Small icon="create" text="Create" />
          <Small icon="edit" text="Edit" />
          <Small icon="attributes" text="Edit Attributes" caret end={6} />
        </Column>
      </RibbonPanel>
      <RibbonPanel title="Properties" w={264} pad={1}>
        <Big name="Match Properties" w={62} />
        <Column $w={20}>
          <Small icon="wheel" />
          <Small icon="weights" />
          <Small icon="linetypes" />
        </Column>
        <Combos>
          <ComboBox $off>
            <i />
            ByLayer
            <Caret $size={4} $color="#6d7480" />
          </ComboBox>
          <ComboBox>
            <hr />
            ByLayer
            <Caret $size={4} />
          </ComboBox>
          <ComboBox>
            <hr />
            ByLayer
            <Caret $size={4} />
          </ComboBox>
        </Combos>
      </RibbonPanel>
      <RibbonPanel title="Groups" w={70} pad={1}>
        <Big name="Group" w={42} />
        <Column $w={24}>
          <Small icon="ungroup" />
          <Small icon="groupEdit" />
          <Small icon="groupSelect" on />
        </Column>
      </RibbonPanel>
      <RibbonPanel title="Utilities" w={97} pad={1}>
        <Big name="Measure" w={70} caret />
        <Column $w={24}>
          <Small icon="quickSelect" />
          <Small icon="selectAll" />
          <Small icon="calculator" />
        </Column>
      </RibbonPanel>
      <RibbonPanel title="Clipboard" w={91} caret={false}>
        <Big name="Paste" w={54} caret />
        <Column $w={32}>
          <Small icon="cut" caret />
          <Small icon="copyClip" caret />
        </Column>
      </RibbonPanel>
      <RibbonPanel title="View" left launcher>
        <Big name="Base" w={62} caret />
      </RibbonPanel>
    </Ribbon>
  );
}

function Tick({ x, y, back }) {
  const s = back ? -1 : 1;
  return <path d={`M${x - 7} ${y + 7 * s}L${x + 7} ${y - 7 * s}`} stroke="#000" strokeWidth="3" />;
}

function SheetDrawing() {
  return (
    <Drawing viewBox="0 178 1920 821" preserveAspectRatio="xMidYMid slice">
      <rect x="464.500" y="226" width="976" height="690" fill="#fff" stroke="#4a4a4a" strokeWidth="1.500" />
      <rect x="475.500" y="237" width="954" height="667.500" fill="none" stroke="#2d2d2d" strokeWidth="5" />

      <g fill="none" stroke="#e88a30" strokeWidth="1.500">
        <path d="M411 183h415v408H411z M766 183h415v408H766z M1092 187h416v408h-416z" />
        <path d="M469 506h415v409H469z M742 589h415v408H742z M1032 534h415v409h-415z" />
      </g>

      <path d="M496 270.500h233v233H496z" fill="none" stroke="#e84040" strokeWidth="1.500" />
      <path d="M483 649.500L671 513.500 859 649.500 788 871H554.500z" fill="none" stroke="#40ecec" strokeWidth="1.300" />
      <path d="M827 859L943.500 657 1060 859z" fill="none" stroke="#38d838" strokeWidth="1.200" />
      <path d="M1068 622.500h329.500v233H1068z" fill="none" stroke="#2c2cc8" strokeWidth="1.300" />
      <circle cx="1295" cy="391" r="116" fill="none" stroke="#f4f430" strokeWidth="1.500" />

      <g fill="none" stroke="#2a2a2a" strokeWidth="1.100">
        <path d="M496 472h233M496 459v53M496 503L729 270M487 494l6 6M585 382l4 5v-5" />
        <path d="M483 688h376M483 654v46M554.500 848H788M554.500 835v32M787.500 835v32" />
        <path d="M525 781A94 94 0 0 1 648.500 871" />
        <path d="M827 868h233M984 657v201M984 858h76M827 863v15" />
        <path d="M1068 827.500h329.500M1372.500 622v233M1359 622.500h38M1359 855h34M1397.500 815v36" />
        <path d="M1068 855L1397 622M1389 611l8 10M1295 351.500h116M1410.500 338v49" />
      </g>
      <path d="M496 494v18M1396 631l2.500-19M521 790l9-16" stroke="#000" strokeWidth="3" />
      <path d="M1382 315h2v2h-2z M1410 390h2v2h-2z M482 649h2v1h-2z" />
      <Tick x={496} y={472} />
      <Tick x={483} y={688} />
      <Tick x={555} y={848} />
      <Tick x={788} y={848} />
      <Tick x={648} y={871} back />
      <Tick x={827} y={867} />
      <Tick x={984} y={857} back />
      <Tick x={1411} y={351} />
      <Tick x={1372} y={622} back />
      <Tick x={1372} y={855} back />
      <Tick x={1397} y={827} />

      <g fontSize="18" fill="#111">
        <text x="556" y="679">0,809</text>
        <text x="650" y="839">1,000</text>
        <text x="615" y="793">108°</text>
        <text x="923" y="858">1,000</text>
        <text x="1331" y="342">0,500</text>
        <text x="1212" y="818">1,414</text>
        <text transform="translate(1362 758) rotate(-90)">1,000</text>
      </g>
      <g fontSize="24" fill="#47806c">
        <text x="510" y="529">Quadrado</text>
        <text x="620" y="895">Pentágono</text>
        <text x="897" y="891">Triângulo</text>
        <text x="1181" y="891">Retângulo raíz de 2</text>
      </g>

      <g fill="none" stroke="#2f55e0" strokeWidth="1.500">
        <path d="M16 895v88h51z M16 976h7v7" />
        <path d="M19 920l5 7 5-7M24 927v7M46 969l10 11M56 969l-10 11" />
      </g>
    </Drawing>
  );
}

function PlotDialog() {
  return (
    <Dialog $x={588} $y={56} $w={744}>
      <DialogTitle $inactive>
        <AutocadLogo />
        <h2>Plot - a3</h2>
        <button aria-label="Close">
          <svg width="12" height="12" viewBox="0 0 12 12">
            <path d="M1 1l10 10M11 1L1 11" stroke="#8a8a8a" />
          </svg>
        </button>
      </DialogTitle>
      <PlotBody>
        <Stack $gap={6}>
          <Group $h={64}>
            <legend>Page setup</legend>
            <Row $h={49}>
              <label htmlFor="setup">N<u>a</u>me:</label>
              <Select id="setup" value="<None>" />
            </Row>
          </Group>
          <Group $h={155} $mb={5}>
            <legend>Printer/plotter</legend>
            <Row $h={32}>
              <label htmlFor="printer">Na<u>m</u>e:</label>
              <Select id="printer" value="DWG To PDF.pc3" plotter $pl={21} $h={23} />
            </Row>
            <Row><span>Plotter:</span>DWG To PDF - PDF ePlot - by Autodesk</Row>
            <Row><span>Where:</span>File</Row>
            <Row><span>Description:</span></Row>
            <CheckLabel $off $h={34}>
              <input type="checkbox" defaultChecked disabled />
              <svg width="11" height="9" viewBox="0 0 11 9" aria-hidden="true">
                <path d="M2 4l3 3 4-5" fill="none" stroke="#fff" />
              </svg>
              <span>Plot to <u>f</u>ile</span>
            </CheckLabel>
          </Group>
          <Group $h={56}>
            <legend>Paper si<u>z</u>e</legend>
            <Row $h={36}>
              <Select label="Paper size" value="ISO A3 (420.00 x 297.00 MM)" />
            </Row>
          </Group>
          <Group $h={77}>
            <legend>Plot area</legend>
            <Row $h={27} $label={90}>
              <label htmlFor="what"><u>W</u>hat to plot:</label>
            </Row>
            <Row $h={21}>
              <Select id="what" value="Layout" $w={101} />
            </Row>
          </Group>
          <Group $h={92}>
            <legend>Plot offset (origin set to printable area)</legend>
            <Row $h={36} $label={15} $gap={7}>
              <label htmlFor="offx"><u>X</u>:</label>
              <TextField id="offx" defaultValue="0.00" />
              mm
            </Row>
            <Row $h={30} $label={15} $gap={7}>
              <label htmlFor="offy"><u>Y</u>:</label>
              <TextField id="offy" defaultValue="0.00" />
              mm
            </Row>
          </Group>
        </Stack>
        <Stack $gap={6}>
          <Group $h={64}>
            <legend>Plot style table (pen assi<u>g</u>nments)</legend>
            <Row $h={49} $gap={2}>
              <Select label="Plot style table" value="acad.ctb" />
              <IconButton aria-label="Edit plot style">
                <PlotterIcon wrench />
              </IconButton>
            </Row>
          </Group>
          <Group $h={108}>
            <legend>Shaded viewport options</legend>
            <Row $h={34} $label={74}>
              <label htmlFor="shade">Shade plot</label>
              <Select id="shade" value="As displayed" $off />
            </Row>
            <Row $h={24} $label={74}>
              <label htmlFor="quality">Quality</label>
              <Select id="quality" value="Normal" />
            </Row>
            <Row $h={32} $label={74}>
              <label htmlFor="dpi">DPI</label>
              <TextField id="dpi" defaultValue="100" disabled $w={120} />
            </Row>
          </Group>
          <Group $h={197} $pt={3}>
            <legend>Plot options</legend>
            {plotOptions.map((option, i) => (
              <CheckLabel key={i}>
                <input type="checkbox" />
                <span>{option}</span>
              </CheckLabel>
            ))}
          </Group>
          <Group $h={86}>
            <legend>Drawing orientation</legend>
            <SheetPreview width="33" height="27" viewBox="0 0 33 27">
              <path d="M1 1h23l8 8v17H1z" fill="#f5f5f5" stroke="#555" />
              <path d="M24 1v8h8z" fill="#555" />
              <path d="M7 21L14 5h1l7 16M10 16h9" fill="none" stroke="#1f7fd0" strokeWidth="2" />
            </SheetPreview>
            <CheckLabel $h={18}>
              <input type="checkbox" />
              <span>Plot upside-down</span>
            </CheckLabel>
          </Group>
        </Stack>
        <PlotFooter>
          <PushButton $w={69}><u>P</u>review...</PushButton>
          <PushButton $w={75}><u>H</u>elp</PushButton>
          <button aria-label="Less options">
            <svg width="20" height="20" viewBox="0 0 20 20">
              <circle cx="10" cy="10" r="9.500" fill="none" stroke="#555" />
              <path d="M12 5l-5 5 5 5" fill="none" stroke="#444" strokeWidth="2" />
            </svg>
          </button>
        </PlotFooter>
      </PlotBody>
    </Dialog>
  );
}

function StyleEditor() {
  return (
    <Dialog $x={722} $y={67} $w={475}>
      <DialogTitle>
        <AutocadLogo />
        <h2>Plot Style Table Editor - acad.ctb</h2>
        <button aria-label="Close">
          <svg width="12" height="12" viewBox="0 0 12 12">
            <path d="M1 1l10 10M11 1L1 11" stroke="#111" />
          </svg>
        </button>
      </DialogTitle>
      <EditorBody>
        <EditorTabs>
          <EditorTab>General</EditorTab>
          <EditorTab>Table View</EditorTab>
          <EditorTab $active>Form View</EditorTab>
        </EditorTabs>
        <EditorPanel>
          <Stack>
            <FieldTitle as="div">Plot styles:</FieldTitle>
            <StyleList>
              <StyleItems>
                {plotColors.map((color, i) => (
                  <StyleItem key={i} $color={color} $focus={i === 0}>
                    <i />
                    <span>Color {i + 1}</span>
                  </StyleItem>
                ))}
                <StyleItem $color="#a00000"><i /></StyleItem>
              </StyleItems>
              <ScrollTrack />
              <ScrollTrack $bottom />
            </StyleList>
            <FieldTitle htmlFor="desc" $spaced>Description:</FieldTitle>
            <DescriptionBox>
              <textarea id="desc" />
              <div>
                <Caret $size={5} $color="#a0a0a0" $turn={180} />
                <Caret $size={5} $color="#a0a0a0" />
              </div>
            </DescriptionBox>
            <ButtonPair>
              <PushButton $w={81} disabled>Add Style</PushButton>
              <PushButton $w={81} disabled>Delete Style</PushButton>
            </ButtonPair>
          </Stack>
          <div>
            <Properties>
              <legend>Properties</legend>
              <PropertyRow>
                <label htmlFor="color">Color:</label>
                <Select id="color" value="Black" swatch $pl={20} $w={148} />
              </PropertyRow>
              <PropertyRow $narrow $short>
                <label htmlFor="dither">Dither:</label>
                <Select id="dither" value="On" $w={89} $h={20} />
              </PropertyRow>
              <PropertyRow $narrow>
                <label htmlFor="gray">Grayscale:</label>
                <Select id="gray" value="Off" $w={89} $h={20} />
              </PropertyRow>
              <PropertyRow $narrow $short>
                <label htmlFor="pen">Pen #:</label>
                <SpinBox id="pen" value="Automatic" $w={88} />
              </PropertyRow>
              <PropertyRow $narrow>
                <label htmlFor="vpen">Virtual pen #:</label>
                <SpinBox id="vpen" value="Automatic" $w={88} />
              </PropertyRow>
              <PropertyRow $short>
                <label htmlFor="screening">Screening:</label>
                <SpinBox id="screening" value="100" $w={148} />
              </PropertyRow>
              <PropertyRow $short>
                <label htmlFor="linetype">Linetype:</label>
                <Select id="linetype" value="Use object linetype" $w={148} />
              </PropertyRow>
              <PropertyRow $narrow $short>
                <label htmlFor="adaptive">Adaptive:</label>
                <Select id="adaptive" value="On" $w={89} $h={20} />
              </PropertyRow>
              <PropertyRow>
                <label htmlFor="weight">Lineweight:</label>
                <WeightBox id="weight" aria-haspopup="listbox" aria-expanded="true">
                  <Stroke $h={1} />
                  0.1300 mm
                  <Chevron />
                </WeightBox>
                <WeightMenu role="listbox" aria-label="Lineweight">
                  <WeightItem role="option">Use object lineweight</WeightItem>
                  {lineweights.map(([weight, h]) => (
                    <WeightItem
                      key={weight}
                      role="option"
                      aria-selected={weight === "0.1300"}
                      $selected={weight === "0.1300"}
                    >
                      <Stroke $h={h} />
                      <span>{weight} mm</span>
                    </WeightItem>
                  ))}
                </WeightMenu>
              </PropertyRow>
              <PropertyRow $short><label>Line end style:</label></PropertyRow>
              <PropertyRow><label>Line join style:</label></PropertyRow>
              <PropertyRow><label>Fill style:</label></PropertyRow>
            </Properties>
            <ButtonPair $pad="10px 8px 0 14px">
              <PushButton $w={116}>Edit Lineweights...</PushButton>
              <PushButton $w={80}>Save As...</PushButton>
            </ButtonPair>
          </div>
        </EditorPanel>
        <ButtonPair $end $gap={9}>
          <PushButton $primary $w={111}>Save &amp; Close</PushButton>
          <PushButton $w={81}>Cancel</PushButton>
          <PushButton $w={81}>Help</PushButton>
        </ButtonPair>
      </EditorBody>
    </Dialog>
  );
}

function CommandPanel() {
  return (
    <CommandWindow>
      <CommandGrip>
        <svg width="16" height="5" viewBox="0 0 16 5" aria-hidden="true">
          <path d="M0 1h16M0 4h16" stroke="#d8d8d8" strokeDasharray="1 1" />
        </svg>
        <Icon name="close" size={12} />
        <svg width="14" height="16" viewBox="0 0 14 16" aria-hidden="true">
          <path d="M1 13l7-7c-1-3 1-5 4-5l-2 3 1 1 3-1c0 3-2 4-5 4l-6 7z" fill="#d8d8d8" />
        </svg>
      </CommandGrip>
      <CommandBody>
        <CommandHistory>
          <div>Command:</div>
          <div>Command: _QSAVE</div>
          <div>Command: PLOT</div>
        </CommandHistory>
        <CommandLine>
          <svg width="17" height="13" viewBox="0 0 17 13" aria-hidden="true">
            <path d="M.5.5h16v12H.5z M1 3h15" fill="none" stroke="#555" />
            <path d="M3 5l3 2-3 2M8 9h5" fill="none" stroke="#555" />
          </svg>
          <Caret $color="#555" />
          <input placeholder="Type a command" />
          <Caret $size={4} $color="#777" $turn={180} />
        </CommandLine>
      </CommandBody>
    </CommandWindow>
  );
}

const st = { fill: "none", stroke: "#e4e6e9", strokeWidth: 1.3 };

function Glyph({ children }) {
  return (
    <svg width="20" height="20" viewBox="0 0 20 20" aria-hidden="true">
      {children}
    </svg>
  );
}

function Status() {
  return (
    <StatusBar>
      <Slash />
      <FileTab $layout>Mod</FileTab>
      <PlusButton aria-label="New layout">+</PlusButton>
      <Slash />
      <StatusSpacer />
      <StatusCell $w={41}>PAPER</StatusCell>
      <StatusCell $w={104}>
        <Glyph><path d="M4 2v15h14M4 12h5v5" {...st} /></Glyph>
        <Glyph>
          <circle cx="9" cy="11" r="6.500" {...st} />
          <path d="M9 11l7-8M9 11h9" {...st} />
        </Glyph>
        <Caret $size={4} />
        <Glyph>
          <path d="M4 3l12 14" stroke="#d06070" />
          <path d="M10 2v16" stroke="#50b070" />
          <path d="M9 9h3v3H9z" {...st} />
        </Glyph>
        <Caret $size={4} />
      </StatusCell>
      <StatusCell $w={22} $on>
        <Glyph><path d="M17 3L3 17h15" {...st} /><path d="M9 8h3v3H9z" fill="#fff" /></Glyph>
      </StatusCell>
      <StatusCell $w={22} $on>
        <Glyph><path d="M5 7v11h13V5H8M2 2h5v5H2z" {...st} /></Glyph>
      </StatusCell>
      <StatusCell $w={17}><Caret $size={4} /></StatusCell>
      <StatusCell $w={73}>
        <Glyph>
          <path d="M8 3h10v14H3V9" {...st} strokeDasharray="2 1.500" />
          <path d="M8 9h6v6H8z M2 7V2h5M2 2l6 6" {...st} />
        </Glyph>
        <Glyph>
          <path d="M8 3l7 14-5-2-2-4-2 4-5 2z" fill="#e4e6e9" />
          <circle cx="15" cy="6" r="2.500" {...st} />
        </Glyph>
        <Glyph>
          <path d="M9 3l7 14-5-2-2-4-2 4-5 2z" fill="#e4e6e9" />
          <path d="M17 2l-4 5h4l-2 4" {...st} />
        </Glyph>
      </StatusCell>
      <StatusCell $w={40}>
        <Glyph>
          <circle cx="10" cy="10" r="4.500" fill="none" stroke="#e4e6e9" strokeWidth="4" />
          <circle cx="10" cy="10" r="7.500" fill="none" stroke="#e4e6e9" strokeWidth="2" strokeDasharray="3 2.900" />
        </Glyph>
        <Caret $size={4} />
      </StatusCell>
      <StatusCell $w={24}><Glyph><path d="M10 2v16M2 10h16" {...st} strokeWidth="2" /></Glyph></StatusCell>
      <StatusCell $w={25}>
        <Glyph>
          <path d="M3 3h7v7H3z M9 12l3 5H6z" {...st} />
          <circle cx="15" cy="9" r="3" {...st} />
        </Glyph>
      </StatusCell>
      <StatusCell $w={49}>
        <Glyph>
          <circle cx="10" cy="9" r="7" fill="#2b78c8" />
          <path d="M1 11h6v6H1z" fill="#f0b830" />
          <path d="M2 4h8M6 1v8" stroke="#fff" />
          <path d="M8 13l4 4 7-7" fill="none" stroke="#3fa050" strokeWidth="3" />
        </Glyph>
        <Glyph>
          <path d="M6 3H2v10h4M10 3h6v6M6 6h6" {...st} />
          <path d="M12 9h6l-2 3h-6z M10 14l6 0 2-2M10 17l6 0 2-2" fill="none" stroke="#e0a070" strokeWidth="1.500" />
        </Glyph>
      </StatusCell>
      <StatusCell $w={49}>
        <Glyph>
          <path d="M3 4h15v12H3z" {...st} />
          <path d="M11 9l4-3v3zM10 11l-4 3v-3z" fill="#e4e6e9" stroke="#e4e6e9" />
        </Glyph>
        <Glyph><path d="M2 4h16M2 10h16M2 16h16" {...st} strokeWidth="2" /></Glyph>
      </StatusCell>
    </StatusBar>
  );
}

const quickTools = [
  ["newFile", "New"], ["open", "Open"], ["save", "Save"], ["saveAs", "Save As"],
  ["openMobile", "Open from Web"], ["saveMobile", "Save to Web"], ["print", "Plot"], ["undo", "Undo"],
];

export default function App() {
  return (
    <Page>
      <GlobalStyle />
      <TitleBar>
        <QuickAccess>
          <AppBadge><b>A</b>CAD</AppBadge>
          {quickTools.map(([icon, label]) => (
            <button key={icon} aria-label={label}><Icon name={icon} size={18} /></button>
          ))}
          <button className="narrow" aria-label="Undo list"><Caret /></button>
          <button aria-label="Redo"><Icon name="redo" size={18} /></button>
          <button className="narrow" aria-label="Redo list"><Caret $color="#8a8f98" /></button>
          <button aria-label="Customize"><Icon name="customize" size={16} /></button>
          <ShareLink href="#share"><Icon name="plane" size={16} />Share</ShareLink>
        </QuickAccess>
        <WindowTitle>
          <span>Autodesk AutoCAD 2023</span>
          <span>figuras_geo.dwg</span>
        </WindowTitle>
        <TitleTools>
          <Caret $size={4} $color="#fff" $turn={-90} />
          <SearchBox placeholder="Type a keyword or phrase" aria-label="Keyword" />
          <ToolButton aria-label="Search"><Icon name="search" size={18} /></ToolButton>
          <ToolButton aria-label="Account"><Icon name="user" size={18} /></ToolButton>
          <UserName>al7161</UserName>
          <Caret />
          <ToolButton $ml={8} aria-label="Store"><Icon name="cart" size={16} /></ToolButton>
          <ToolButton aria-label="Apps"><Icon name="apps" size={16} /></ToolButton>
          <Caret />
          <Divider />
          <ToolButton aria-label="Help"><HelpMark>?</HelpMark></ToolButton>
          <Caret />
          <ToolButton $ml={62} aria-label="Minimize"><Icon name="minimize" size={16} /></ToolButton>
          <ToolButton aria-label="Restore"><Icon name="restore" size={16} /></ToolButton>
          <ToolButton aria-label="Close"><Icon name="close" size={16} /></ToolButton>
        </TitleTools>
      </TitleBar>
      <RibbonTabs>
        {tabs.map((tab) => (
          <RibbonTab key={tab} $active={tab === "Home"} $context={tab === "Layout"}>{tab}</RibbonTab>
        ))}
        <RibbonToggle aria-label="Minimize ribbon"><span>▲</span><Caret /></RibbonToggle>
      </RibbonTabs>
      <RibbonArea />
      <FileTabs>
        <Slash />
        <FileTab>Start</FileTab>
        <FileTab $active>figuras_geo <Icon name="close" size={10} /></FileTab>
        <PlusButton aria-label="New drawing">+</PlusButton>
        <Slash />
      </FileTabs>
      <Workspace>
        <SheetDrawing />
        <ViewControls>
          <Icon name="minimize" size={16} />
          <Icon name="restore" size={16} />
          <Icon name="close" size={16} />
        </ViewControls>
        <NavBar>
          <svg width="24" height="110" viewBox="0 0 24 110" aria-hidden="true">
            <g fill="none" stroke="currentColor" strokeWidth="2">
              <circle cx="12" cy="18" r="9" />
              <circle cx="12" cy="18" r="4" />
              <path d="M6 58V46M9 54V41M13 54V40M17 54V43M6 52c1 8 10 8 12 0" />
              <path d="M4 72l16 18M20 72L4 90" />
            </g>
          </svg>
        </NavBar>
        <CommandPanel />
        <PlotDialog />
        <StyleEditor />
      </Workspace>
      <Status />
    </Page>
  );
}
